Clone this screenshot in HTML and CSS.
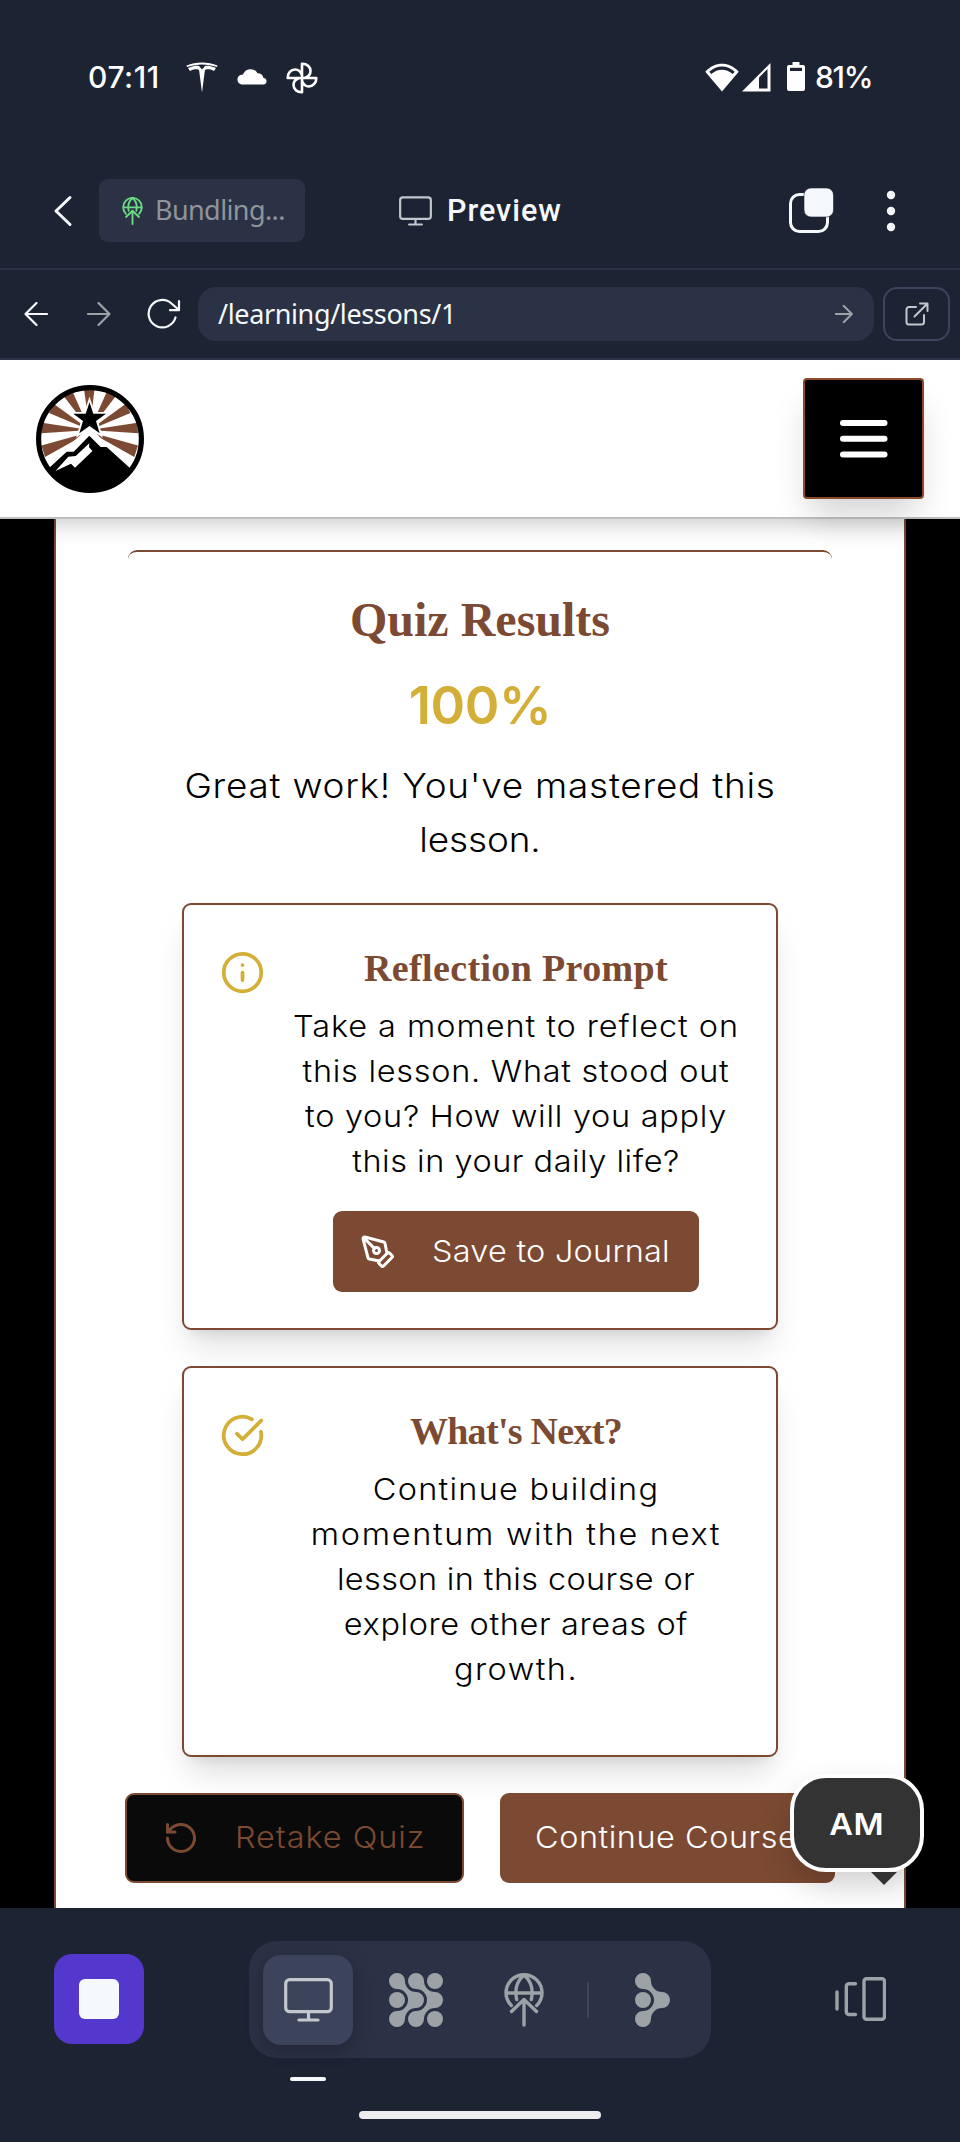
FILE: index.html
```html
<!DOCTYPE html>
<html lang="en">
<head>
<meta charset="utf-8">
<title>Preview</title>
<link rel="stylesheet" href="styles.css">
</head>
<body>
<div class="phone">
  <div class="status">
    <span class="clock">07:11</span>
    <svg class="st-tesla" width="32" height="31" viewBox="0 0 32 31" fill="#fff"><path d="M.5 3.6C10-.6 22-.6 31.500 3.600L31 5C21 1.500 11 1.500 1 5ZM2 6C7 4 11 3.600 13 4L16 7.500 19 4C21 3.600 25 4 30 6L28 9C26 7.500 23.500 7.200 21 7.200 19.500 7.200 19 8 18.800 9L16 30.500 13.200 9C13 8 12.500 7.200 11 7.200 8.500 7.200 6 7.500 4 9Z"/></svg>
    <svg class="st-cloud" width="32" height="18" viewBox="0 0 32 18" fill="#fff"><path d="M5.500 17.500A5 5 0 0 1 4.500 8 5 5 0 0 1 7 7.500 8 8 0 0 1 21.500 6.200 6 6 0 0 1 27.500 11 3.300 3.300 0 0 1 28 17.500Z"/></svg>
    <svg class="st-fan" width="32" height="32" viewBox="0 0 32 32" fill="none" stroke="#fff" stroke-width="2.600" stroke-linejoin="round"><path d="M16 16V1.700C21 1.500 24.500 5 24.500 9 24.500 12.500 22 15 18.500 16M16 16H30.300C30.500 20.500 27 24.500 23 24.500 19.500 24.500 17 22 16 18.500M16 16V30.300C11 30.500 7.500 27 7.500 23 7.500 19.500 10 17 13.500 16M16 16H1.700C1.500 11 5 7.500 9 7.500 12.500 7.500 15 10 16 13.500"/></svg>
    <span class="grow"></span>
    <svg class="st-wifi" width="34" height="29" viewBox="0 0 34 29"><path d="M17 28.500.3 8.800C10-1.800 24-1.800 33.700 8.800Z" fill="#fff"/><path d="M4.300 8.700C12 1.600 22 1.600 29.700 8.700L27.800 11C21 5.200 13 5.200 6.200 11Z" fill="#1c2333"/></svg>
    <svg class="st-signal" width="29" height="29" viewBox="0 0 29 29"><path d="M0 28.500 28.500 0V28.500Z" fill="#fff"/><path d="M17 14.500 25.500 6V25.500H17Z" fill="#1c2333"/></svg>
    <svg class="st-batt" width="18" height="29" viewBox="0 0 18 29"><path d="M5.500 0H12.500V3H16A2 2 0 0 1 18 5V27A2 2 0 0 1 16 29H2A2 2 0 0 1 0 27V5A2 2 0 0 1 2 3H5.500Z" fill="#fff"/><path d="M3 5.800H15V9H3Z" fill="#1c2333"/></svg>
    <span class="pct">81%</span>
  </div>

  <div class="appbar">
    <svg class="chev" width="20" height="32" viewBox="0 0 20 32" fill="none" stroke="#f5f9fc" stroke-width="3" stroke-linecap="round" stroke-linejoin="round"><path d="M17 2.500 3 16 17 29.500"/></svg>
    <div class="chip">
      <svg width="21" height="28" viewBox="0 0 40 54" fill="none" stroke="#6cd985" stroke-width="3.600" stroke-linecap="round" stroke-linejoin="round"><path d="M7.300 32.500A18 18 0 1 1 32.700 32.500M2 20H38M20 2C13 8 10.500 17 12.700 26.500M20 2C27 8 29.500 17 27.300 26.500M20 52V26.500M7.500 38.500 20 26.500 32.500 38.500"/></svg>
      <span class="chip-t">Bundling...</span>
    </div>
    <div class="title">
      <svg width="33" height="30" viewBox="0 0 49 44" fill="none" stroke="#c2c8cc" stroke-width="3.200" stroke-linecap="round" stroke-linejoin="round"><rect x="1.700" y="1.700" width="45.600" height="32" rx="4"/><path d="M24.500 34V42M15 42H34"/></svg>
      <span class="title-t">Preview</span>
    </div>
    <span class="grow"></span>
    <svg class="copy" width="46" height="46" viewBox="0 0 46 46"><rect x="1.500" y="6.500" width="37" height="37" rx="9" fill="none" stroke="#f5f9fc" stroke-width="3"/><rect x="15" y="0" width="29.500" height="29" rx="7" fill="#f5f9fc" stroke="#1c2333" stroke-width=".6"/></svg>
    <svg class="kebab" width="10" height="42" viewBox="0 0 10 42" fill="#f5f9fc"><circle cx="5" cy="5" r="4.200"/><circle cx="5" cy="21" r="4.200"/><circle cx="5" cy="37" r="4.200"/></svg>
  </div>

  <div class="urlbar">
    <svg class="ub-back" width="24" height="24" viewBox="0 0 24 24" fill="none" stroke="#f5f9fc" stroke-width="2.200" stroke-linecap="round" stroke-linejoin="round"><path d="M23 12H1.500M12.500 1 1.500 12 12.500 23"/></svg>
    <svg class="ub-fwd" width="24" height="24" viewBox="0 0 24 24" fill="none" stroke="#9da2a6" stroke-width="2.200" stroke-linecap="round" stroke-linejoin="round"><path d="M1 12H22.500M11.500 1 22.500 12 11.500 23"/></svg>
    <svg class="ub-reload" width="34" height="31" viewBox="0 0 34 31" fill="none" stroke="#f5f9fc" stroke-width="2.200" stroke-linecap="round" stroke-linejoin="round"><path d="M28.500 19.500A13.700 13.700 0 1 1 24.500 5.500L32 12M32 3V12.200H23"/></svg>
    <div class="url">
      <span class="url-t">/learning/lessons/1</span>
      <svg width="18" height="18" viewBox="0 0 24 24" fill="none" stroke="#9da2a6" stroke-width="2.600" stroke-linecap="round" stroke-linejoin="round"><path d="M1 12H22.500M11.500 1 22.500 12 11.500 23"/></svg>
    </div>
    <div class="open">
      <svg width="24" height="24" viewBox="0 0 24 24" fill="none" stroke="#c2c8cc" stroke-width="2" stroke-linecap="round" stroke-linejoin="round"><path d="M11 5H4A2.500 2.500 0 0 0 1.500 7.500V20A2.500 2.500 0 0 0 4 22.500H16.500A2.500 2.500 0 0 0 19 20V13M9.500 14.500 22.500 1.500M15 1.500H22.500V9"/></svg>
    </div>
  </div>

  <div class="site">
    <header class="site-head">
      <svg width="108" height="108" viewBox="0 0 108 108">
        <circle cx="54" cy="54" r="51" fill="#fff"/>
        <g fill="#7c4a32"><path d="M53.700 45 48 4H58.500ZM53.700 45 70.700 7 79.500 11.500ZM53.700 45 89.500 19 94.500 28ZM53.700 45 101.500 37.700 102 48.300ZM53.700 47 102 60.500 98.300 72ZM53.700 45 36.700 7 28 11.500ZM53.700 45 18 19 13 28ZM53.700 45 6 37.700 5.500 48.300ZM53.700 47 5.500 60.500 9 72Z"/></g>
        <path d="M53.500 42.300 68 56 98 84 54 100 10 84 40 54Z" fill="#fff"/>
        <path d="M53.500 17.300 57.300 28.700H70L60 36 63.700 48.300 53.500 41 43.300 48.300 47 36 37.300 28.700H49.700Z" fill="#000" stroke="#fff" stroke-width="3.600" paint-order="stroke"/>
        <path d="M53.500 42.300 63 51 54 58 44 51Z" fill="#fff"/>
        <path d="M12 84 30.700 66.700H37.700L53.300 50.700 64.700 62H70.700L95 84C88 97 73 106 54 106 35 106 20 97 12 84Z"/>
        <path d="M53.300 58.300 53 62.300 56.500 66 39 82.700 35 78.700 19.500 86 32.300 71.700 39.700 71Z" fill="#fff"/>
        <circle cx="54" cy="54" r="51.400" fill="none" stroke="#000" stroke-width="5.200"/>
      </svg>
      <div class="burger"><svg width="48" height="38" viewBox="0 0 48 38" fill="#fff"><rect x="0" y="0" width="47.500" height="6" rx="3"/><rect x="0" y="15.700" width="47.500" height="6" rx="3"/><rect x="0" y="31.400" width="47.500" height="6" rx="3"/></svg></div>
    </header>
    <main class="sheet">
      <section class="results">
        <h1 class="serif h1">Quiz Results</h1>
        <div class="score">100%</div>
        <p class="lead"><span class="k7">Great work! You've mastered this</span><span class="k0">lesson.</span></p>

        <article class="card c1">
          <svg class="cic" width="45" height="45" viewBox="0 0 24 24" fill="none" stroke="#d4af37" stroke-width="2" stroke-linecap="round" stroke-linejoin="round"><circle cx="12" cy="12" r="10"/><path d="M12 16v-4M12 8h.01"/></svg>
          <div class="cbody">
            <h2 class="serif h2 h2-wide">Reflection Prompt</h2>
            <p class="txt"><span class="k9">Take a moment to reflect on</span><span class="k7">this lesson. What stood out</span><span class="k7">to you? How will you apply</span><span class="k5">this in your daily life?</span></p>
            <div class="btn save"><svg width="36" height="36" viewBox="0 0 24 24" fill="none" stroke="#fff" stroke-width="2" stroke-linecap="round" stroke-linejoin="round"><path d="M15.707 21.293a1 1 0 0 1-1.414 0l-1.586-1.586a1 1 0 0 1 0-1.414l5.586-5.586a1 1 0 0 1 1.414 0l1.586 1.586a1 1 0 0 1 0 1.414z"/><path d="m18 13-1.375-6.874a1 1 0 0 0-.746-.776L3.235 2.028a1 1 0 0 0-1.207 1.207L5.350 15.879a1 1 0 0 0 .776.746L13 18M2.300 2.300l7.286 7.286"/><circle cx="11" cy="11" r="2"/></svg><span class="k3">Save to Journal</span></div>
          </div>
        </article>

        <article class="card c2">
          <svg class="cic" width="45" height="45" viewBox="0 0 24 24" fill="none" stroke="#d4af37" stroke-width="2" stroke-linecap="round" stroke-linejoin="round"><path d="M21.801 10A10 10 0 1 1 17 3.335"/><path d="m9 11 3 3L22 4"/></svg>
          <div class="cbody">
            <h2 class="serif h2 h2-tight">What's Next?</h2>
            <p class="txt"><span class="k12">Continue building</span><span class="k16">momentum with the next</span><span class="k4">lesson in this course or</span><span class="k6">explore other areas of</span><span class="k14">growth.</span></p>
          </div>
        </article>

        <div class="actions">
          <div class="btn retake"><svg width="36" height="36" viewBox="0 0 24 24" fill="none" stroke="#7c4a32" stroke-width="2" stroke-linecap="round" stroke-linejoin="round"><path d="M3 12a9 9 0 1 0 9-9 9.750 9.750 0 0 0-6.740 2.740L3 8"/><path d="M3 3v5h5"/></svg><span class="k9">Retake Quiz</span></div>
          <div class="btn cont"><span class="k5">Continue Course</span></div>
        </div>
      </section>
    </main>
    <div class="am"><span class="am-t">AM</span></div>
  </div>

  <div class="dock">
    <div class="stop"><i></i></div>
    <div class="tabs">
      <div class="tab on"><svg width="49" height="44" viewBox="0 0 49 44" fill="none" stroke="#c2c8cc" stroke-width="3.200" stroke-linecap="round" stroke-linejoin="round"><rect x="1.700" y="1.700" width="45.600" height="32" rx="4"/><path d="M24.500 34V42M15 42H34"/></svg><i class="mark"></i></div>
      <div class="tab"><svg width="54" height="54" viewBox="0 0 54 54" fill="#9da2a6"><path d="M8 0A8 8 0 0 1 16 8A11 11 0 0 0 27 19A8 8 0 0 1 27 35A11 11 0 0 0 16 46A8 8 0 1 1 8 38A11 11 0 0 0 8 16A8 8 0 0 1 8 0Z"/><path transform="translate(19)" d="M8 0A8 8 0 0 1 16 8A11 11 0 0 0 27 19A8 8 0 0 1 27 35A11 11 0 0 0 16 46A8 8 0 1 1 8 38A11 11 0 0 0 8 16A8 8 0 0 1 8 0Z"/><circle cx="8" cy="27" r="8"/><circle cx="46" cy="8" r="8"/><circle cx="46" cy="46" r="8"/></svg></div>
      <div class="tab"><svg width="40" height="54" viewBox="0 0 40 54" fill="none" stroke="#9da2a6" stroke-width="3.400" stroke-linecap="round" stroke-linejoin="round"><path d="M7.300 32.500A18 18 0 1 1 32.700 32.500M2 20H38M20 2C13 8 10.500 17 12.700 26.500M20 2C27 8 29.500 17 27.300 26.500M20 52V26.500M7.500 38.500 20 26.500 32.500 38.500"/></svg></div>
      <i class="sep"></i>
      <div class="tab"><svg width="35" height="54" viewBox="0 0 35 54" fill="#9da2a6"><path d="M8 0A8 8 0 0 1 16 8A11 11 0 0 0 27 19A8 8 0 0 1 27 35A11 11 0 0 0 16 46A8 8 0 1 1 8 38A11 11 0 0 0 8 16A8 8 0 0 1 8 0Z"/><circle cx="8" cy="27" r="8"/></svg></div>
    </div>
    <svg class="panes" width="51" height="44" viewBox="0 0 51 44" fill="none" stroke="#9da2a6" stroke-width="3.400" stroke-linecap="round" stroke-linejoin="round"><path d="M2 15V32M20.500 6.700H14A3 3 0 0 0 11.300 9.500V34.500A3 3 0 0 0 14 37.500H20.500"/><rect x="29" y="1.700" width="20.500" height="40.600" rx="2.500"/></svg>
  </div>
  <i class="home"></i>
</div>
</body>
</html>
```
FILE: styles.css
```css
* { box-sizing: border-box; }
body { margin: 0; background: #1c2333; }
h1, h2, p { margin: 0; font-weight: 400; }
svg { display: block; flex: none; }
i { display: block; }
.grow { flex: 1; }
.phone { width: 960px; height: 2142px; background: #1c2333; color: #fff; display: flex; flex-direction: column; font-family: Inter, "Liberation Sans", sans-serif; overflow: hidden; }

/* letter-spacing steps, in tenths of a pixel */
.k0 { letter-spacing: -.1px; }
.k3 { letter-spacing: .25px; }
.k4 { letter-spacing: .37px; }
.k5 { letter-spacing: .5px; }
.k6 { letter-spacing: .6px; }
.k7 { letter-spacing: .7px; }
.k9 { letter-spacing: .9px; }
.k12 { letter-spacing: 1.2px; }
.k14 { letter-spacing: 1.4px; }
.k16 { letter-spacing: 1.6px; }

.status { height: 153px; padding: 0 90px 0 88px; display: flex; align-items: flex-start; flex: none; }
.clock, .pct { font-weight: 500; font-size: 30px; line-height: 36px; margin-top: 59px; white-space: nowrap; }
.clock { width: 98px; letter-spacing: .6px; }
.pct { width: 55px; margin-left: 10px; letter-spacing: -1.3px; }
.st-tesla { margin-top: 62px; }
.st-cloud { margin: 67px 0 0 18px; }
.st-fan { margin: 62px 0 0 18px; }
.st-wifi { margin-top: 63px; }
.st-signal { margin: 63px 0 0 3px; }
.st-batt { margin: 62px 0 0 16px; }

.appbar { height: 117px; border-bottom: 2px solid #2b3245; display: flex; align-items: center; padding: 0 64px 0 53px; flex: none; }
.chip { margin-left: 26px; width: 206px; height: 63px; border-radius: 9px; background: #2b3245; display: flex; align-items: center; padding-left: 23px; gap: 12px; }
.chip-t { font: 400 27px/36px "Noto Sans", sans-serif; letter-spacing: -.6px; color: #8f959b; white-space: nowrap; margin-top: -1px; }
.title { display: flex; align-items: center; gap: 15px; margin-left: 94px; }
.title-t { font: 500 30.500px/36px Roboto, sans-serif; letter-spacing: 1px; color: #f5f9fc; width: 115px; }
.copy { margin-right: 51px; }

.urlbar { height: 90px; border-bottom: 2px solid #2b3245; display: flex; align-items: center; padding: 0 10px 1px 24px; flex: none; }
.ub-fwd { margin-left: 39px; }
.ub-reload { margin-left: 36px; }
.url { margin-left: 17px; width: 676px; height: 54px; border-radius: 18px; background: #2b3245; display: flex; align-items: center; justify-content: space-between; padding: 0 21px 0 20px; }
.url-t { font: 400 27px/36px "Noto Sans", sans-serif; letter-spacing: -.37px; color: #f5f9fc; white-space: nowrap; }
.open { margin-left: 9px; width: 67px; height: 54px; border: 2px solid #3c445c; border-radius: 14px; display: flex; align-items: center; justify-content: center; }

.site { height: 1548px; background: #000; position: relative; flex: none; overflow: hidden; }
.site-head { height: 159px; background: #fff; border-bottom: 2px solid #bfbfbf; display: flex; align-items: center; justify-content: space-between; padding: 0 36px; position: relative; z-index: 2; box-shadow: 0 9px 22px -4px rgba(0,0,0,.2); }
.burger { width: 121px; height: 121px; background: #000; border: 2px solid #8b4a2b; border-radius: 4px; display: flex; align-items: center; justify-content: center; box-shadow: 0 22px 34px -7px rgba(0,0,0,.18); }
.sheet { margin: 0 54px; height: 1389px; background: #fff; border: solid #7c4a32; border-width: 0 2px; color: #000; padding: 31px 72px 0; }
.results { border-top: 2px solid #7c4a32; border-radius: 9px; height: 1400px; padding: 35px 54px 0; text-align: center; }
.serif { font-family: "Liberation Serif", serif; font-weight: 700; color: #7c4a32; white-space: nowrap; }
.h1 { font-size: 48px; line-height: 66px; }
.score { font-size: 52.500px; line-height: 72px; font-weight: 600; color: #d4af37; margin-top: 16px; letter-spacing: -.4px; }
.lead { font-size: 34.500px; line-height: 54px; font-weight: 300; margin: 18px -10px 0; }
.lead span, .txt span { display: block; white-space: nowrap; transform: scaleX(1.07); }
.card { display: flex; width: 596px; border: 2px solid #7c4a32; border-radius: 9px; background: #fff; padding: 36px 36px 0; box-shadow: 0 22px 34px -7px rgba(0,0,0,.13), 0 9px 14px -9px rgba(0,0,0,.13); }
.c1 { height: 427px; margin-top: 36px; }
.c2 { height: 391px; margin-top: 36px; }
.cic { margin-top: 9px; }
.cbody { margin-left: 27px; width: 448px; }
.h2 { font-size: 38px; line-height: 54px; }
.h2-wide { letter-spacing: .36px; }
.h2-tight { letter-spacing: -.7px; }
.txt { font-size: 30.300px; line-height: 45px; font-weight: 300; margin-top: 9px; }
.btn { display: flex; align-items: center; font-size: 30.300px; font-weight: 300; white-space: nowrap; border-radius: 9px; background: #7c4a32; color: #fff; }
.btn span { transform: scaleX(1.07); transform-origin: 0 50%; margin-top: -2px; }
.save { width: 366px; height: 81px; margin: 27px auto 0; padding-left: 27px; gap: 36px; }
.actions { display: flex; margin: 36px -57px 0; gap: 36px; }
.retake { width: 339px; height: 90px; background: #0a0a0a; border: 2px solid #7c4a32; color: #7c4a32; padding-left: 36px; gap: 36px; }
.cont { width: 335px; height: 90px; padding-left: 35px; }
.am { position: absolute; z-index: 3; left: 790px; top: 1414px; width: 134px; height: 98px; border: 4px solid #fff; border-radius: 36px; background: #333; display: flex; align-items: center; justify-content: center; font-size: 30.500px; font-weight: 600; box-shadow: 0 14px 30px rgba(0,0,0,.18); }
.am-t { letter-spacing: .5px; transform: scaleX(1.07); }
.am::after { content: ""; position: absolute; left: 77px; top: 94px; border: solid transparent; border-width: 13px 13px 0; border-top-color: #333; }

.dock { height: 184px; display: flex; align-items: flex-start; padding: 33px 74px 0 54px; flex: none; }
.stop { width: 90px; height: 90px; border-radius: 18px; background: #5438cd; margin-top: 13px; display: flex; align-items: center; justify-content: center; }
.stop i { width: 40px; height: 40px; border-radius: 6px; background: #f5f9fc; }
.tabs { margin-left: 105px; width: 462px; height: 117px; border-radius: 28px; background: #2b3245; display: flex; align-items: center; padding: 0 14px; gap: 18px; }
.tab { width: 90px; height: 90px; border-radius: 18px; display: flex; align-items: center; justify-content: center; position: relative; }
.on { background: #3c445c; box-shadow: 0 6px 16px rgba(20,24,38,.45); }
.mark { position: absolute; left: 27px; top: 122px; width: 36px; height: 4px; border-radius: 2px; background: #f5f9fc; }
.sep { width: 2px; height: 36px; background: #3c445c; }
.panes { margin: 36px 0 0 124px; }
.home { width: 242px; height: 8px; border-radius: 4px; background: #eee; margin: 19px auto 0; }
```
